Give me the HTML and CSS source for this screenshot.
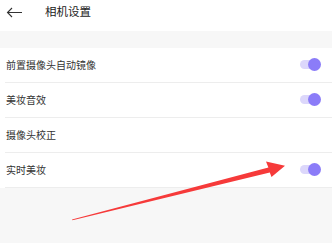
FILE: index.html
```html
<!DOCTYPE html>
<html lang="zh">
<head>
<meta charset="utf-8">
<link rel="stylesheet" href="styles.css">
</head>
<body>
<div class="page">
  <header class="topbar">
    <svg class="back" width="17" height="11" viewBox="0 0 17 11">
      <path d="M16 5.5H1.5M6 1L1.5 5.5L6 10" fill="none" stroke="#333" stroke-width="1.1"/>
    </svg>
    <span class="title">相机设置</span>
  </header>
  <div class="band"></div>
  <ul class="list">
    <li class="row"><span class="label">前置摄像头自动镜像</span><span class="toggle"><span class="knob"></span></span></li>
    <li class="row"><span class="label">美妆音效</span><span class="toggle"><span class="knob"></span></span></li>
    <li class="row"><span class="label">摄像头校正</span></li>
    <li class="row"><span class="label">实时美妆</span><span class="toggle"><span class="knob"></span></span></li>
  </ul>
  <svg class="pointer" width="332" height="243" viewBox="0 0 332 243">
    <polygon points="72,219.5 268.4,167.4 266,161.5 285,165.8 271.5,177 269.8,172.4 72.5,220.2" fill="#f63a3a"/>
  </svg>
</div>
</body>
</html>
```

FILE: styles.css
```css
* { box-sizing: border-box; }
html, body { margin: 0; padding: 0; }
body {
  width: 332px;
  height: 243px;
  overflow: hidden;
  background: #f7f7f7;
  font-family: "Noto Sans CJK SC", "Noto Sans", sans-serif;
  color: #333;
}
.page { position: relative; width: 332px; height: 243px; }
.topbar {
  height: 31px;
  background: #fff;
  display: flex;
  align-items: center;
  padding-left: 6px;
  padding-bottom: 7px;
}
.back { display: block; }
.title {
  margin-left: 22px;
  font-size: 11.5px;
  color: #222;
  line-height: 1;
}
.band { height: 17px; background: #f7f7f7; }
.list {
  list-style: none;
  margin: 0;
  padding: 0 0 0 5px;
  background: #fff;
}
.row {
  height: 35px;
  border-bottom: 1px solid #ededed;
  display: flex;
  align-items: center;
  justify-content: space-between;
  padding-left: 1px;
  padding-right: 12px;
}
.label { font-size: 10px; line-height: 1; color: #333; }
.toggle {
  position: relative;
  width: 20px;
  height: 9px;
  margin-bottom: 2px;
  border-radius: 5px;
  background: #dcd7fb;
}
.knob {
  position: absolute;
  right: -1px;
  top: -2px;
  width: 13px;
  height: 13px;
  border-radius: 50%;
  background: #8b7cf8;
}
.pointer { position: absolute; left: 0; top: 0; }
```
